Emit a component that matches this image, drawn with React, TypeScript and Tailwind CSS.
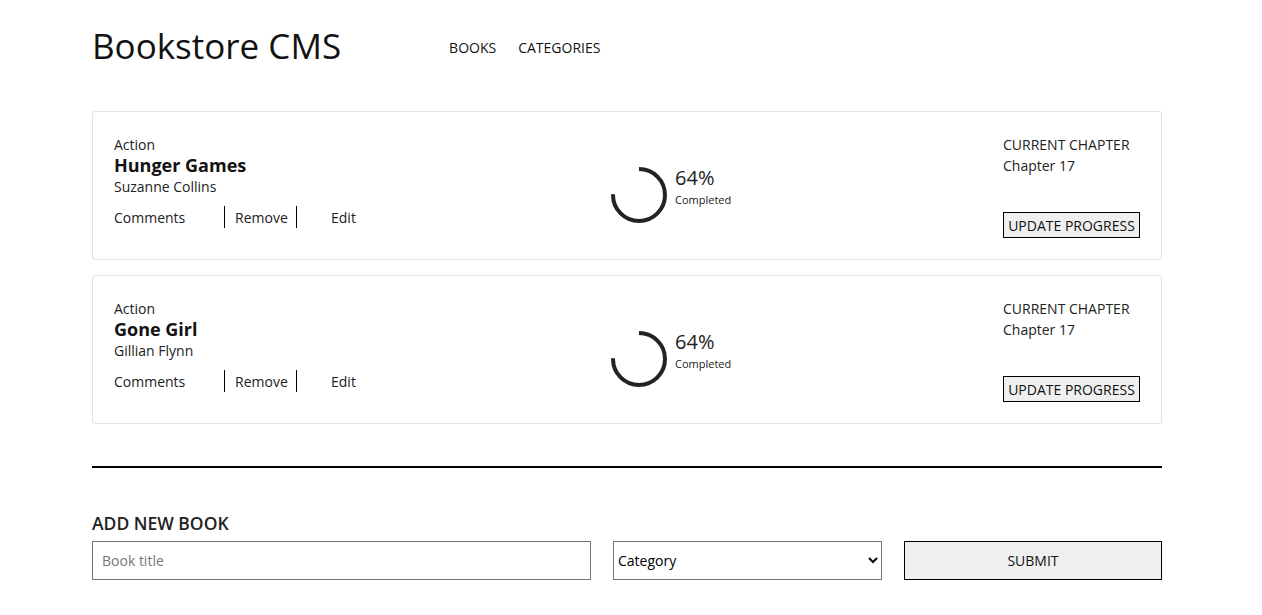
import type { ReactNode } from "react";

type Book = {
  category: string;
  title: string;
  author: string;
  percent: number;
  chapter: string;
};

const books: Book[] = [
  { category: "Action", title: "Hunger Games", author: "Suzanne Collins", percent: 64, chapter: "Chapter 17" },
  { category: "Action", title: "Gone Girl", author: "Gillian Flynn", percent: 64, chapter: "Chapter 17" },
];

function ProgressRing() {
  const r = 26;
  const c = 2 * Math.PI * r;
  const shown = c * 0.75;
  return (
    <svg width="58" height="58" viewBox="0 0 58 58" className="shrink-0">
      <circle
        cx="29"
        cy="29"
        r={r}
        fill="none"
        stroke="#222327"
        strokeWidth="4"
        strokeDasharray={`${shown} ${c}`}
        transform="rotate(-90 29 29)"
      />
    </svg>
  );
}

function LinkItem({ children, className }: { children: ReactNode; className?: string }) {
  return <button className={`text-[14px] text-[#222] ${className ?? ""}`}>{children}</button>;
}

function BookCard({ book }: { book: Book }) {
  return (
    <li className="flex h-[149px] rounded-[3px] border border-[#e2e2e2] bg-white pl-[21px] pr-[21px]">
      <div className="flex w-[496px] flex-col pt-[24px]">
        <span className="text-[14px] leading-[18px] text-[#222]">{book.category}</span>
        <h2 className="-mt-px text-[18px] font-bold leading-[24px] text-[#121212]">{book.title}</h2>
        <span className="text-[14px] leading-[20px] text-[#222]">{book.author}</span>
        <div className="mt-[9px] flex items-center">
          <LinkItem className="w-[110px] text-left">Comments</LinkItem>
          <span className="h-[22px] w-px bg-black" />
          <LinkItem className="w-[71px] text-left pl-[10px]">Remove</LinkItem>
          <span className="h-[22px] w-px bg-black" />
          <LinkItem className="pl-[34px]">Edit</LinkItem>
        </div>
      </div>
      <div className="mt-[54px] flex w-[393px] items-center gap-[7px] self-start">
        <ProgressRing />
        <div className="-mt-[18px] flex flex-col">
          <span className="text-[20px] leading-[26px] text-[#222]">{book.percent}%</span>
          <span className="mt-[2px] text-[11px] leading-[14px] text-[#222]">Completed</span>
        </div>
      </div>
      <div className="flex flex-1 flex-col pt-[24px]">
        <span className="text-[14px] leading-[18px] text-[#222]">CURRENT CHAPTER</span>
        <span className="mt-[3px] text-[14px] leading-[18px] text-[#222]">{book.chapter}</span>
        <button className="mt-[37px] h-[26px] w-[137px] border border-black bg-[#efefef] text-[14px] text-[#111]">
          UPDATE PROGRESS
        </button>
      </div>
    </li>
  );
}

export default function App() {
  return (
    <div
      className="min-h-screen bg-white text-[#121212]"
      style={{ fontFamily: '"Open Sans", "Noto Sans", sans-serif' }}
    >
      <div className="ml-[92px] w-[1070px] pt-[22px]">
        <header className="flex items-center">
          <h1 className="text-[35px] font-medium leading-[48px] text-[#121212]">Bookstore CMS</h1>
          <nav className="ml-[108px] flex gap-[22px] pt-[2px] text-[14px] text-[#121212]">
            <a>BOOKS</a>
            <a>CATEGORIES</a>
          </nav>
        </header>

        <ul className="mt-[41px] flex flex-col gap-[15px]">
          {books.map((b) => (
            <BookCard key={b.title} book={b} />
          ))}
        </ul>

        <hr className="mt-[42px] border-t-2 border-black" />

        <section className="mt-[44px]">
          <h3 className="text-[17.5px] font-semibold leading-[22px] text-[#222]">ADD NEW BOOK</h3>
          <form className="mt-[7px] flex gap-[22px]">
            <input
              placeholder="Book title"
              className="h-[39px] w-[499px] border border-[#767676] px-[9px] text-[14px] placeholder:text-[#777]"
            />
            <select className="h-[39px] w-[269px] border border-[#767676] bg-white px-0 text-[14px] text-black">
              <option>Category</option>
            </select>
            <button className="h-[39px] flex-1 border border-black bg-[#efefef] text-[14px] text-[#111]">
              SUBMIT
            </button>
          </form>
        </section>
      </div>
    </div>
  );
}
